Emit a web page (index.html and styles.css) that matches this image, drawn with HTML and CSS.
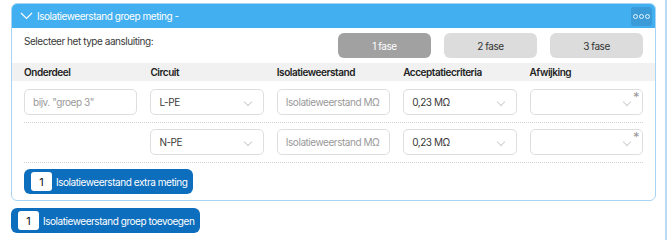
FILE: index.html
```html
<!DOCTYPE html>
<html lang="nl">

<head>
    <meta charset="UTF-8">
    <title>Isolatieweerstand</title>
    <link rel="stylesheet" href="styles.css">
</head>

<body>
    <div class="page">
        <div class="card">
            <div class="card-header">
                <svg class="chevron" width="13" height="8" viewBox="0 0 13 8">
                    <polyline points="1,1 6.5,6.5 12,1" fill="none" stroke="#fff" stroke-width="1.2" />
                </svg>
                <span class="card-title">Isolatieweerstand groep meting -</span>
                <div class="dots">
                    <span></span><span></span><span></span>
                </div>
            </div>
            <div class="card-body">
                <div class="type-row">
                    <div class="type-label">Selecteer het type aansluiting:</div>
                    <div class="type-buttons">
                        <button class="type-btn active">1 fase</button>
                        <button class="type-btn">2 fase</button>
                        <button class="type-btn">3 fase</button>
                    </div>
                </div>
            </div>

            <div class="table-head">
                <div>Onderdeel</div>
                <div>Circuit</div>
                <div>Isolatieweerstand</div>
                <div>Acceptatiecriteria</div>
                <div>Afwijking</div>
            </div>

            <div class="card-body">
                <div class="table-row">
                    <div class="field placeholder">bijv. "groep 3"</div>
                    <div class="field select">L-PE<i class="caret"></i></div>
                    <div class="field placeholder">Isolatieweerstand MΩ</div>
                    <div class="field select">0,23 MΩ<i class="caret"></i></div>
                    <div class="field select required"><i class="caret"></i></div>
                </div>
                <div class="table-row">
                    <div></div>
                    <div class="field select">N-PE<i class="caret"></i></div>
                    <div class="field placeholder">Isolatieweerstand MΩ</div>
                    <div class="field select">0,23 MΩ<i class="caret"></i></div>
                    <div class="field select required"><i class="caret"></i></div>
                </div>
                <button class="count-btn"><span class="count">1</span>Isolatieweerstand extra meting</button>
            </div>
        </div>

        <button class="count-btn outer"><span class="count">1</span>Isolatieweerstand groep toevoegen</button>
    </div>
</body>

</html>
```

FILE: styles.css
```css
body {
    margin: 0;
    font-family: Inter, "Open Sans", sans-serif;
    font-size: 10px;
    letter-spacing: -0.45px;
    color: #3a3a3a;
    background: #fff;
}

.page {
    width: 667px;
    height: 240px;
    box-sizing: border-box;
    padding: 3px 0 0 11px;
    border-right: 2px solid #bcdcf5;
}

.card {
    width: 645px;
    box-sizing: border-box;
    border: 1px solid #a9d5f2;
    border-radius: 6px;
    background: #fff;
}

.card-header {
    height: 24px;
    background: #41aff0;
    border-radius: 5px 5px 0 0;
    display: flex;
    align-items: center;
    padding: 0 3px 0 8px;
    color: #fff;
}

.chevron {
    margin-right: 4px;
}

.card-title {
    flex: 1;
}

.dots {
    width: 21px;
    height: 19px;
    background: #3a9bd8;
    border-radius: 3px;
    display: flex;
    align-items: center;
    justify-content: center;
    gap: 1px;
}

.dots span {
    width: 3px;
    height: 3px;
    border: 1px solid #e6f4fd;
    border-radius: 50%;
}

.card-body {
    padding: 0 12px;
}

.type-row {
    display: flex;
    justify-content: space-between;
    padding-top: 5px;
}

.type-label {
    padding-top: 2px;
}

.type-buttons {
    display: flex;
    gap: 13px;
}

.type-btn {
    width: 93px;
    height: 25px;
    border: none;
    border-radius: 6px;
    background: #dcdcdc;
    color: #333;
    font: inherit;
    letter-spacing: inherit;
}

.type-btn.active {
    background: #a1a1a1;
    color: #fff;
}

.table-head {
    margin-top: 5px;
    height: 18px;
    background: #f1f1f1;
    padding: 0 12px;
    display: grid;
    grid-template-columns: repeat(5, 1fr);
    column-gap: 13px;
    align-items: center;
    font-weight: 600;
    color: #222;
}

.table-row {
    display: grid;
    grid-template-columns: repeat(5, 1fr);
    column-gap: 13px;
    padding: 8px 0 7px;
    border-bottom: 1px dotted #d2d2d2;
}

.table-row + .table-row {
    padding-top: 6px;
}

.field {
    height: 26px;
    box-sizing: border-box;
    border: 1px solid #dedede;
    border-radius: 5px;
    display: flex;
    align-items: center;
    padding: 0 8px;
    position: relative;
    white-space: nowrap;
    overflow: hidden;
}

.placeholder {
    color: #9a9a9a;
}

.caret {
    position: absolute;
    right: 12px;
    top: 9px;
    width: 5px;
    height: 5px;
    border-right: 1px solid #cfcfcf;
    border-bottom: 1px solid #cfcfcf;
    transform: rotate(45deg);
}

.required::after {
    content: "*";
    position: absolute;
    right: 3px;
    top: -1px;
    color: #999;
    font-size: 13px;
}

.count-btn {
    display: flex;
    align-items: center;
    height: 25px;
    margin: 6px 0 6px;
    padding: 0 6px 0 7px;
    border: none;
    border-radius: 6px;
    background: #0d6ebd;
    color: #fff;
    font: inherit;
    letter-spacing: inherit;
}

.count {
    width: 21px;
    height: 19px;
    background: #fff;
    color: #111;
    border-radius: 3px;
    display: flex;
    align-items: center;
    justify-content: center;
    margin-right: 4px;
    font-size: 11px;
    letter-spacing: 0;
}

.count-btn.outer {
    margin-top: 7px;
}
```
